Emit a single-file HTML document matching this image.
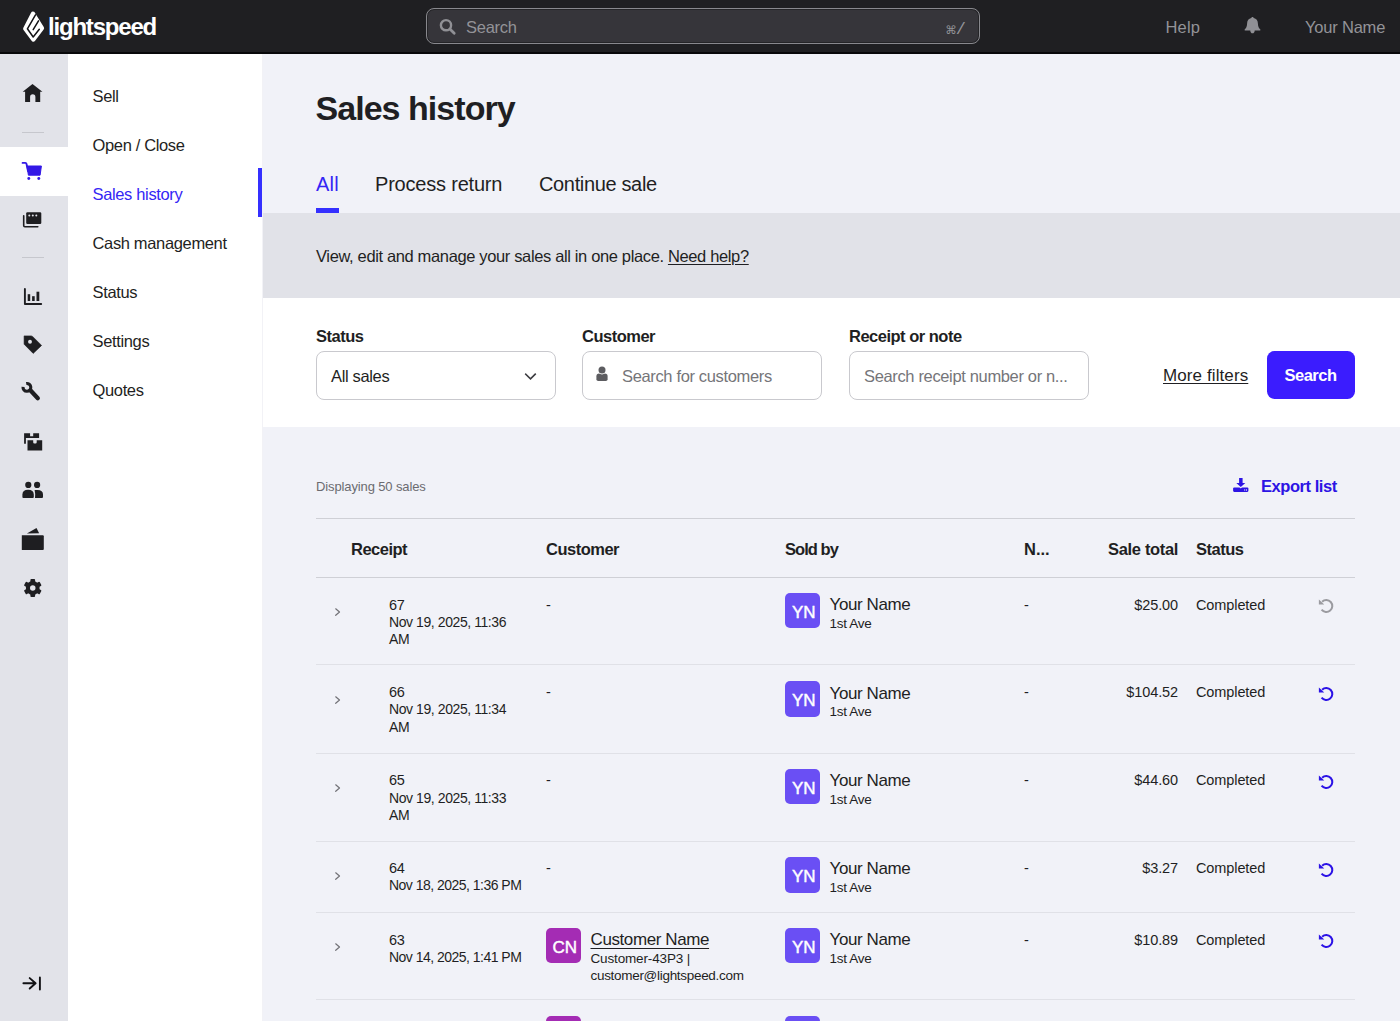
<!DOCTYPE html>
<html lang="en">
<head>
<meta charset="utf-8">
<title>Sales history</title>
<style>
*{box-sizing:border-box;margin:0;padding:0}
html,body{width:1400px;height:1021px;overflow:hidden}
body{font-family:"Liberation Sans",sans-serif;color:#1f1f23;background:#f1f2f8;position:relative;font-size:16px}
a{color:inherit}
.abs{position:absolute}
/* top bar */
#top{position:absolute;left:0;top:0;width:1400px;height:54px;background:#1f1f22;border-bottom:2px solid #08080a}
#logo-text{position:absolute;left:48px;top:11.7px;font-size:24px;font-weight:bold;color:#fff;letter-spacing:-1.2px;line-height:30px}
#gsearch{position:absolute;left:426px;top:8px;width:554px;height:36px;border:1px solid #88888d;border-radius:8px;background:#36353a;box-shadow:inset 0 0 0 1px #242427}
#gsearch .ph{position:absolute;left:39px;top:1px;line-height:35px;font-size:16.5px;color:#939398;letter-spacing:-0.25px}
#gsearch .kb{position:absolute;right:13px;top:2px;line-height:35px;color:#939398;white-space:nowrap}
#gsearch .kb .cmd{font-family:"DejaVu Sans","Liberation Sans",sans-serif;font-size:11.5px;position:relative;top:-0.5px}
#gsearch .kb .sl{font-family:"Liberation Mono",monospace;font-size:17px;margin-left:-1px}
.tnav{position:absolute;top:0;line-height:55px;font-size:16.5px;color:#939398;letter-spacing:-0.2px}
/* icon rail */
#rail{position:absolute;left:0;top:54px;width:68px;height:967px;background:#e2e3e9}
#rail .act{position:absolute;left:0;top:93px;width:68px;height:49px;background:#fff}
#rail .sep{position:absolute;left:22px;width:22px;height:1px;background:#c6c7cd}
#rail svg{position:absolute}
/* menu */
#menu{position:absolute;left:68px;top:54px;width:195px;height:967px;background:#fff;border-right:1px solid #f2f2f6}
#menu .it{position:absolute;left:24.5px;font-size:16.5px;line-height:20px;letter-spacing:-0.35px;color:#1f1f23;white-space:nowrap}
#menu .it.on{color:#3426f5}
#menu .bar{position:absolute;left:189.7px;top:114px;width:4.4px;height:49.2px;background:#3530ff}
/* main */
#main{position:absolute;left:263px;top:54px;width:1137px;height:967px;background:#f1f2f8}
h1{position:absolute;left:315.5px;top:84.6px;font-size:34px;line-height:46px;font-weight:bold;letter-spacing:-0.96px;color:#1f1f23;white-space:nowrap}
.tab{position:absolute;top:169.8px;font-size:20px;line-height:28px;letter-spacing:-0.2px;white-space:nowrap;color:#1f1f23}
.tab.on{color:#3426f5;letter-spacing:0.2px}
#tabline{position:absolute;left:316px;top:208.4px;width:23.4px;height:4.6px;background:#3530ff}
#banner{position:absolute;left:263px;top:213px;width:1137px;height:85px;background:#e1e2e8}
#banner p{position:absolute;left:53px;top:32px;font-size:16.5px;line-height:22px;letter-spacing:-0.36px;white-space:nowrap}
#filters{position:absolute;left:263px;top:298px;width:1137px;height:129px;background:#fff}
.lbl{position:absolute;top:326.2px;font-size:16.5px;font-weight:bold;line-height:20px;letter-spacing:-0.5px;white-space:nowrap}
.inp{position:absolute;top:351px;width:240px;height:49px;border:1px solid #c9c9ce;border-radius:8px;background:#fff}
.inp span{position:absolute;top:0;line-height:48px;font-size:16.5px;letter-spacing:-0.35px;white-space:nowrap}
.inp .phd{color:#757579}
#more{position:absolute;left:1163px;top:365px;font-size:17px;line-height:22px;letter-spacing:0.1px;text-decoration:underline;text-underline-offset:2px;text-decoration-thickness:1px;white-space:nowrap}
#sbtn{position:absolute;left:1266.5px;top:351.4px;width:88px;height:48px;border-radius:7.5px;background:#3b1cfe;color:#fff;font-weight:bold;font-size:16.5px;line-height:48px;text-align:center;letter-spacing:-0.5px}
/* list */
#disp{position:absolute;left:316px;top:477.8px;font-size:13px;line-height:18px;color:#6b6b70;letter-spacing:-0.12px;white-space:nowrap}
#export{position:absolute;left:1261px;top:475px;font-size:16.5px;line-height:22px;font-weight:bold;color:#2d14e4;letter-spacing:-0.45px;white-space:nowrap}
.hl{position:absolute;left:316px;width:1039px;height:1px;background:#e0e1e7}
.hl.d{background:#cfd0d6}
.th{position:absolute;top:538.8px;font-size:16.5px;font-weight:bold;line-height:20px;letter-spacing:-0.5px;white-space:nowrap}
.row{position:absolute;left:316px;width:1039px;height:0}
.row>*{position:absolute;white-space:nowrap}
.t14{font-size:14.5px;line-height:18px;letter-spacing:-0.3px;color:#1f1f23}
.t14.dt{font-size:14px;letter-spacing:-0.42px}
.t14.amt,.t14.st{letter-spacing:-0.1px}
.t13{font-size:13.5px;line-height:17.5px;letter-spacing:-0.3px;color:#1f1f23}
.t16{font-size:17px;line-height:20px;letter-spacing:-0.4px;color:#1f1f23}
.av{width:35.4px;height:35.4px;border-radius:5px;background:#6a4ff4;color:#fff;font-size:17px;line-height:39px;text-align:center;letter-spacing:-0.2px;padding-left:2px;-webkit-text-stroke:0.45px #fff}
.av.cn{background:#a42cb4}
</style>
</head>
<body>
<div id="top">
  <svg class="abs" style="left:16px;top:4px" width="40" height="46" viewBox="0 0 40 46"><path d="M17.0 9.8 L25.9 24.2 L17.35 35.5 L9.3 24.7 Z" fill="#fff" stroke="#fff" stroke-width="4.4" stroke-linejoin="round"/><path d="M19.5 10.8 L11.4 24.8 L17.2 33.0 L23.3 25.3" fill="none" stroke="#121215" stroke-width="1.5" stroke-linejoin="round" stroke-linecap="round"/><path d="M22.5 16.9 L17.2 25.7" fill="none" stroke="#121215" stroke-width="1.5" stroke-linecap="round"/></svg>
  <div id="logo-text">lightspeed</div>
  <div id="gsearch">
    <svg class="abs" style="left:12px;top:9px" width="18" height="18" viewBox="0 0 18 18"><circle cx="7" cy="7.2" r="5.1" fill="none" stroke="#909095" stroke-width="2.4"/><path d="M10.9 11.1 L15.2 15.3" stroke="#909095" stroke-width="2.8" stroke-linecap="round"/></svg>
    <span class="ph">Search</span><span class="kb"><span class="cmd">⌘</span><span class="sl">/</span></span>
  </div>
  <span class="tnav" style="left:1165.5px;letter-spacing:0.15px">Help</span>
  <svg class="abs" style="left:1244px;top:16px" width="17" height="18" viewBox="0 0 17 18"><path d="M8.5 1 C9.2 1 9.6 1.5 9.7 2.1 C12.3 2.7 13.9 4.7 13.9 7.4 C13.9 10.6 15 12.1 16.3 13.3 L16.3 14.4 L0.7 14.4 L0.7 13.3 C2 12.1 3.1 10.6 3.1 7.4 C3.1 4.7 4.7 2.7 7.3 2.1 C7.4 1.5 7.8 1 8.5 1 Z M6.3 14.4 L10.7 14.4 C10.7 16.2 9.7 17.3 8.5 17.3 C7.3 17.3 6.3 16.2 6.3 14.4 Z" fill="#909095"/></svg>
  <span class="tnav" style="left:1305px">Your Name</span>
</div>

<div id="rail">
  <div class="act"></div>
  <div class="sep" style="top:78px"></div>
  <div class="sep" style="top:203px"></div>
  <svg class="abs" style="left:0;top:0" width="68" height="967" viewBox="0 54 68 967">
<!-- home -->
<path d="M32.5 84 L42.4 91.8 L40.2 91.8 L40.2 101.9 L35.4 101.9 L35.4 97 A2.65 2.65 0 0 0 30.1 97 L30.1 101.9 L25.1 101.9 L25.1 91.8 L22.7 91.8 Z" fill="#1e1e21"/>
<!-- cart -->
<g fill="#3318e6" stroke="#3318e6"><path d="M22.6 162.9 L25.3 162.9 Q26.3 162.9 26.5 163.9 L28 171" fill="none" stroke-width="1.9" stroke-linecap="round"/><path d="M27 166 L41.4 166 L40.1 175.2 L28.4 175.2 Z" stroke-width="1" stroke-linejoin="round"/><circle cx="28.8" cy="178.5" r="1.45" stroke="none"/><circle cx="38.8" cy="178.5" r="1.45" stroke="none"/></g>
<!-- register -->
<rect x="26.2" y="212.2" width="15.1" height="11.7" rx="1.2" fill="#1e1e21"/>
<circle cx="29.3" cy="215.5" r="1" fill="#e2e3e9"/><circle cx="32.8" cy="215.5" r="1" fill="#e2e3e9"/><circle cx="36.3" cy="215.5" r="1" fill="#e2e3e9"/>
<path d="M23.7 215.8 L23.7 225.6 Q23.7 226.7 24.8 226.7 L37.8 226.7" fill="none" stroke="#1e1e21" stroke-width="1.6" stroke-linecap="round"/>
<!-- chart -->
<path d="M24.9 289 L24.9 304 L41.2 304" fill="none" stroke="#1e1e21" stroke-width="1.9" stroke-linecap="round" stroke-linejoin="round"/>
<rect x="27.7" y="294.2" width="2.5" height="6.8" fill="#1e1e21"/><rect x="32.1" y="296.2" width="2.6" height="4.8" fill="#1e1e21"/><rect x="36.5" y="291.7" width="2.8" height="9.3" fill="#1e1e21"/>
<!-- tag -->
<path d="M24.1 335.9 L31 335.9 Q32 335.9 32.8 336.7 L41.6 345.4 L33.2 353.4 L24.1 344.2 Z" fill="#1e1e21" stroke="#1e1e21" stroke-width="0.6" stroke-linejoin="round"/><circle cx="30" cy="341.8" r="1.95" fill="#e2e3e9"/>
<!-- wrench -->
<path d="M26.22 383.56 A3.9 3.9 0 1 1 23.03 386.92" fill="none" stroke="#1e1e21" stroke-width="3.1" />
<path d="M30.6 390.6 L37.8 398.2" stroke="#1e1e21" stroke-width="4.3" stroke-linecap="round"/>
<!-- boxes -->
<path d="M24.1 433.2 L30.1 433.2 L30.1 436.3 L33.2 436.3 L33.2 433.2 L39.1 433.2 L39.1 437.9 L25.9 437.9 L25.9 443.8 L24.1 443.8 Z" fill="#1e1e21"/>
<path d="M27.5 440.2 L33.2 440.2 L33.2 442.2 Q33.2 443.4 34.4 443.4 L35.5 443.4 Q36.7 443.4 36.7 442.2 L36.7 440.2 L42.2 440.2 L42.2 450.6 L27.5 450.6 Z" fill="#1e1e21"/>
<!-- people -->
<circle cx="28.3" cy="484.9" r="3.1" fill="#1e1e21"/><circle cx="37.1" cy="484.9" r="3.1" fill="#1e1e21"/>
<path d="M22.4 497 L22.4 494.5 Q22.4 489.8 28.1 489.8 Q33.8 489.8 33.8 494.5 L33.8 497 Q33.8 498 32.8 498 L23.4 498 Q22.4 498 22.4 497 Z" fill="#1e1e21"/>
<path d="M34.6 490 L37.5 490 Q43 490 43 494.5 L43 497 Q43 498 42 498 L35 498 Q35.6 494 34.6 490 Z" fill="#1e1e21"/>
<!-- wallet -->
<path d="M21.8 535.3 L42.8 535.3 Q43.8 535.3 43.8 536.3 L43.8 549 Q43.8 550 42.8 550 L21.8 550 Z" fill="#1e1e21"/>
<path d="M26.9 533.6 L36.5 528 L39.1 533.2 Z" fill="#1e1e21"/>
<!-- gear -->
<g fill="#1e1e21"><circle cx="32.75" cy="588.0" r="6.9"/><rect x="30.40" y="579.00" width="4.7" height="5" rx="1" transform="rotate(0 32.75 588.0)"/><rect x="30.40" y="579.00" width="4.7" height="5" rx="1" transform="rotate(60 32.75 588.0)"/><rect x="30.40" y="579.00" width="4.7" height="5" rx="1" transform="rotate(120 32.75 588.0)"/><rect x="30.40" y="579.00" width="4.7" height="5" rx="1" transform="rotate(180 32.75 588.0)"/><rect x="30.40" y="579.00" width="4.7" height="5" rx="1" transform="rotate(240 32.75 588.0)"/><rect x="30.40" y="579.00" width="4.7" height="5" rx="1" transform="rotate(300 32.75 588.0)"/></g><circle cx="32.75" cy="588.0" r="2.75" fill="#e2e3e9"/>
<!-- collapse -->
<g fill="none" stroke="#111114" stroke-width="1.9" stroke-linecap="round" stroke-linejoin="round"><path d="M23.4 983.3 L35.2 983.3 M29.7 978.1 L35.6 983.3 L29.7 988.5 M39.9 977.4 L39.9 989.6"/></g>
</svg>
</div>

<div id="menu">
  <div class="it" style="top:31.5px">Sell</div>
  <div class="it" style="top:80.5px">Open / Close</div>
  <div class="it on" style="top:129.5px">Sales history</div>
  <div class="it" style="top:178.5px">Cash management</div>
  <div class="it" style="top:227.5px">Status</div>
  <div class="it" style="top:276.5px">Settings</div>
  <div class="it" style="top:325.5px">Quotes</div>
  <div class="bar"></div>
</div>

<div id="main"></div>
<h1>Sales history</h1>
<div class="tab on" style="left:316px">All</div>
<div class="tab" style="left:375px">Process return</div>
<div class="tab" style="left:539px;letter-spacing:-0.35px">Continue sale</div>
<div id="tabline"></div>
<div id="banner"><p>View, edit and manage your sales all in one place. <a style="text-decoration:underline;text-underline-offset:2px;text-decoration-thickness:1px">Need help?</a></p></div>
<div id="filters"></div>
<div class="lbl" style="left:316px">Status</div>
<div class="lbl" style="left:582px">Customer</div>
<div class="lbl" style="left:849px">Receipt or note</div>
<div class="inp" style="left:316px"><span style="left:14px">All sales</span>
  <svg class="abs" style="left:207px;top:19px" width="14" height="10" viewBox="0 0 14 10"><path d="M1.8 3.2 L6.5 7.8 L11.2 3.2" fill="none" stroke="#3c3c41" stroke-width="1.6" stroke-linecap="square" stroke-linejoin="miter"/></svg></div>
<div class="inp" style="left:582px"><span class="phd" style="left:39px">Search for customers</span>
  <svg class="abs" style="left:11.6px;top:13.7px" width="14" height="16" viewBox="0 0 14 16"><path d="M1.4 13.2 L1.4 10.4 Q1.4 7.6 4.2 7.6 L9.8 7.6 Q12.6 7.6 12.6 10.4 L12.6 13.2 Q12.6 15 10.8 15 L3.2 15 Q1.4 15 1.4 13.2 Z" fill="#5c5c60"/><circle cx="7" cy="4" r="4.4" fill="#fff"/><circle cx="7" cy="4" r="3.5" fill="#5c5c60"/></svg></div>
<div class="inp" style="left:849px;width:239.5px"><span class="phd" style="left:14px">Search receipt number or n...</span></div>
<div id="more">More filters</div>
<div id="sbtn">Search</div>

<div id="disp">Displaying 50 sales</div>
<svg class="abs" style="left:1232px;top:477px" width="18" height="16" viewBox="0 0 18 16"><rect x="1.1" y="10.4" width="15.3" height="4.5" rx="1.1" fill="#2d14e4"/><path d="M3.2 5.6 L14.4 5.6 L8.8 11.6 Z" fill="#f1f2f8"/><path d="M7.1 1 L10.6 1 L10.6 5.9 L13.3 5.9 L8.8 10 L4.3 5.9 L7.1 5.9 Z" fill="#2d14e4"/><rect x="12.2" y="12.4" width="1" height="1.2" fill="#f1f2f8"/><rect x="14" y="12.4" width="1" height="1.2" fill="#f1f2f8"/></svg>
<div id="export">Export list</div>
<div class="hl d" style="top:518.3px"></div>
<div class="th" style="left:351px">Receipt</div>
<div class="th" style="left:546px">Customer</div>
<div class="th" style="left:785px;letter-spacing:-0.95px">Sold by</div>
<div class="th" style="left:1024px;letter-spacing:0">N...</div>
<div class="th" style="left:1108px;letter-spacing:-0.33px">Sale total</div>
<div class="th" style="left:1196px">Status</div>
<div class="hl d" style="top:577px"></div>
<!--ROWS-->
<div class="row" style="top:577.6px"><svg style="left:18px;top:29.5px" width="8" height="11" viewBox="0 0 8 11"><path d="M1.7 1.8 L5.5 5.05 L1.7 8.3" fill="none" stroke="#727277" stroke-width="1.2" stroke-linecap="round" stroke-linejoin="round"/></svg><span class="t14 num" style="left:73px;top:18px">67</span><span class="t14 dt" style="left:73px;top:35.5px">Nov 19, 2025, 11:36</span><span class="t14 dt" style="left:73px;top:52.8px">AM</span><span class="t14" style="left:230px;top:18px">-</span><div class="av" style="left:469px;top:15.5px">YN</div><span class="t16 yname" style="left:513.5px;top:17px">Your Name</span><span class="t13 ave" style="left:513.5px;top:37px">1st Ave</span><span class="t14" style="left:708px;top:18px">-</span><span class="t14 amt" style="right:177px;top:18px">$25.00</span><span class="t14 st" style="left:880px;top:18px">Completed</span><svg style="left:1002px;top:20.5px" width="17" height="16" viewBox="0 0 17 16"><path d="M4.13 3.68 A6 6 0 1 1 3.57 11.69" fill="none" stroke="#9b9ba0" stroke-width="2"/><path d="M0.9 1.6 L0.9 6.6 L6.2 6.6 Z" fill="#9b9ba0"/></svg></div>
<div class="hl" style="top:664px"></div>
<div class="row" style="top:665.8px"><svg style="left:18px;top:29.5px" width="8" height="11" viewBox="0 0 8 11"><path d="M1.7 1.8 L5.5 5.05 L1.7 8.3" fill="none" stroke="#727277" stroke-width="1.2" stroke-linecap="round" stroke-linejoin="round"/></svg><span class="t14 num" style="left:73px;top:17px">66</span><span class="t14 dt" style="left:73px;top:34.5px">Nov 19, 2025, 11:34</span><span class="t14 dt" style="left:73px;top:51.8px">AM</span><span class="t14" style="left:230px;top:17px">-</span><div class="av" style="left:469px;top:15.5px">YN</div><span class="t16 yname" style="left:513.5px;top:18px">Your Name</span><span class="t13 ave" style="left:513.5px;top:37px">1st Ave</span><span class="t14" style="left:708px;top:17px">-</span><span class="t14 amt" style="right:177px;top:17px">$104.52</span><span class="t14 st" style="left:880px;top:17px">Completed</span><svg style="left:1002px;top:20.5px" width="17" height="16" viewBox="0 0 17 16"><path d="M4.13 3.68 A6 6 0 1 1 3.57 11.69" fill="none" stroke="#2b12e6" stroke-width="2"/><path d="M0.9 1.6 L0.9 6.6 L6.2 6.6 Z" fill="#2b12e6"/></svg></div>
<div class="hl" style="top:752.7px"></div>
<div class="row" style="top:753.4px"><svg style="left:18px;top:29.5px" width="8" height="11" viewBox="0 0 8 11"><path d="M1.7 1.8 L5.5 5.05 L1.7 8.3" fill="none" stroke="#727277" stroke-width="1.2" stroke-linecap="round" stroke-linejoin="round"/></svg><span class="t14 num" style="left:73px;top:18px">65</span><span class="t14 dt" style="left:73px;top:35.5px">Nov 19, 2025, 11:33</span><span class="t14 dt" style="left:73px;top:52.8px">AM</span><span class="t14" style="left:230px;top:18px">-</span><div class="av" style="left:469px;top:15.5px">YN</div><span class="t16 yname" style="left:513.5px;top:18px">Your Name</span><span class="t13 ave" style="left:513.5px;top:38px">1st Ave</span><span class="t14" style="left:708px;top:18px">-</span><span class="t14 amt" style="right:177px;top:18px">$44.60</span><span class="t14 st" style="left:880px;top:18px">Completed</span><svg style="left:1002px;top:20.5px" width="17" height="16" viewBox="0 0 17 16"><path d="M4.13 3.68 A6 6 0 1 1 3.57 11.69" fill="none" stroke="#2b12e6" stroke-width="2"/><path d="M0.9 1.6 L0.9 6.6 L6.2 6.6 Z" fill="#2b12e6"/></svg></div>
<div class="hl" style="top:840.6px"></div>
<div class="row" style="top:841.7px"><svg style="left:18px;top:29.5px" width="8" height="11" viewBox="0 0 8 11"><path d="M1.7 1.8 L5.5 5.05 L1.7 8.3" fill="none" stroke="#727277" stroke-width="1.2" stroke-linecap="round" stroke-linejoin="round"/></svg><span class="t14 num" style="left:73px;top:17px">64</span><span class="t14 dt" style="left:73px;top:34.5px;letter-spacing:-0.52px">Nov 18, 2025, 1:36 PM</span><span class="t14" style="left:230px;top:17px">-</span><div class="av" style="left:469px;top:15.5px">YN</div><span class="t16 yname" style="left:513.5px;top:17px">Your Name</span><span class="t13 ave" style="left:513.5px;top:37px">1st Ave</span><span class="t14" style="left:708px;top:17px">-</span><span class="t14 amt" style="right:177px;top:17px">$3.27</span><span class="t14 st" style="left:880px;top:17px">Completed</span><svg style="left:1002px;top:20.5px" width="17" height="16" viewBox="0 0 17 16"><path d="M4.13 3.68 A6 6 0 1 1 3.57 11.69" fill="none" stroke="#2b12e6" stroke-width="2"/><path d="M0.9 1.6 L0.9 6.6 L6.2 6.6 Z" fill="#2b12e6"/></svg></div>
<div class="hl" style="top:912.2px"></div>
<div class="row" style="top:912.6px"><svg style="left:18px;top:29.5px" width="8" height="11" viewBox="0 0 8 11"><path d="M1.7 1.8 L5.5 5.05 L1.7 8.3" fill="none" stroke="#727277" stroke-width="1.2" stroke-linecap="round" stroke-linejoin="round"/></svg><span class="t14 num" style="left:73px;top:18px">63</span><span class="t14 dt" style="left:73px;top:35.5px;letter-spacing:-0.52px">Nov 14, 2025, 1:41 PM</span><div class="av cn" style="left:230px;top:15.5px">CN</div><span class="t16 cname" style="left:274.5px;top:17px;text-decoration:underline;text-underline-offset:2.5px;text-decoration-thickness:1px">Customer Name</span><span class="t13" style="left:274.5px;top:37.5px;letter-spacing:-0.15px">Customer-43P3 |</span><span class="t13" style="left:274.5px;top:54px">customer@lightspeed.com</span><div class="av" style="left:469px;top:15.5px">YN</div><span class="t16 yname" style="left:513.5px;top:17px">Your Name</span><span class="t13 ave" style="left:513.5px;top:37px">1st Ave</span><span class="t14" style="left:708px;top:18px">-</span><span class="t14 amt" style="right:177px;top:18px">$10.89</span><span class="t14 st" style="left:880px;top:18px">Completed</span><svg style="left:1002px;top:20.5px" width="17" height="16" viewBox="0 0 17 16"><path d="M4.13 3.68 A6 6 0 1 1 3.57 11.69" fill="none" stroke="#2b12e6" stroke-width="2"/><path d="M0.9 1.6 L0.9 6.6 L6.2 6.6 Z" fill="#2b12e6"/></svg></div>
<div class="hl" style="top:998.9px"></div>
<div class="row" style="top:1000.4px"><svg style="left:18px;top:29.5px" width="8" height="11" viewBox="0 0 8 11"><path d="M1.7 1.8 L5.5 5.05 L1.7 8.3" fill="none" stroke="#727277" stroke-width="1.2" stroke-linecap="round" stroke-linejoin="round"/></svg><span class="t14 num" style="left:73px;top:19px">62</span><span class="t14 dt" style="left:73px;top:36.5px;letter-spacing:-0.52px">Nov 14, 2025, 1:38 PM</span><div class="av cn" style="left:230px;top:15.5px">CN</div><span class="t16 cname" style="left:274.5px;top:19px;text-decoration:underline;text-underline-offset:2.5px;text-decoration-thickness:1px">Customer Name</span><span class="t13" style="left:274.5px;top:39.5px;letter-spacing:-0.15px">Customer-43P3 |</span><span class="t13" style="left:274.5px;top:56px">customer@lightspeed.com</span><div class="av" style="left:469px;top:15.5px">YN</div><span class="t16 yname" style="left:513.5px;top:19px">Your Name</span><span class="t13 ave" style="left:513.5px;top:39px">1st Ave</span><span class="t14" style="left:708px;top:19px">-</span><span class="t14 amt" style="right:177px;top:19px">$21.78</span><span class="t14 st" style="left:880px;top:19px">Completed</span><svg style="left:1002px;top:20.5px" width="17" height="16" viewBox="0 0 17 16"><path d="M4.13 3.68 A6 6 0 1 1 3.57 11.69" fill="none" stroke="#2b12e6" stroke-width="2"/><path d="M0.9 1.6 L0.9 6.6 L6.2 6.6 Z" fill="#2b12e6"/></svg></div>
<!--/ROWS-->
</body>
</html>
